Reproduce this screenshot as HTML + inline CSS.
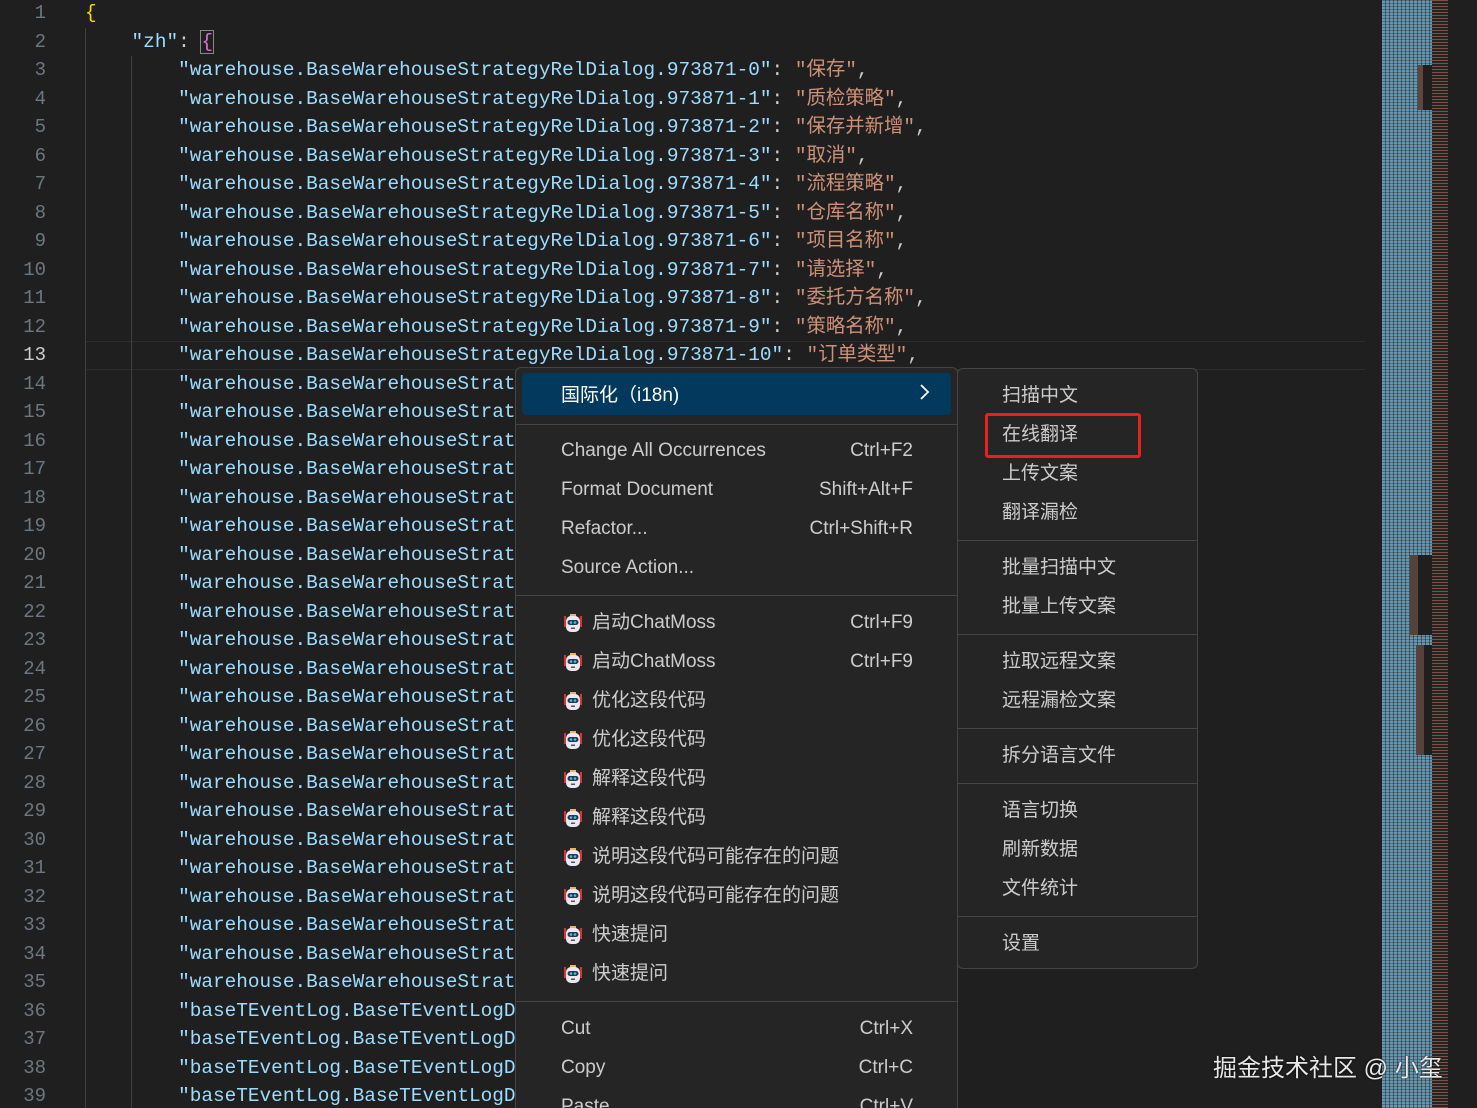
<!DOCTYPE html>
<html><head><meta charset="utf-8"><style>
*{margin:0;padding:0;box-sizing:border-box}
html,body{width:1477px;height:1108px;overflow:hidden;background:#1f1f1f}
#w{position:relative;width:1477px;height:1108px;overflow:hidden;background:#1f1f1f;font-family:"Liberation Mono","Noto Sans CJK SC",monospace}
.ln{position:absolute;left:0;width:46px;text-align:right;font-size:19px;color:#6e7681;height:28.5px;line-height:28.5px}
.cl{position:absolute;left:85px;font-size:19.4px;height:28.5px;line-height:28.5px;white-space:pre;color:#cccccc}
.k{color:#9cdcfe}.s{color:#ce9178}.p{color:#cccccc}
.g{position:absolute;width:1px;background:#404040}
.menu{position:absolute;background:#252526;border:1px solid #454545;border-radius:6px;font-family:"Liberation Sans","Noto Sans CJK SC",sans-serif;font-size:19px;color:#cccccc}
.it{position:absolute;left:0;right:0;height:39px;line-height:39px}
.it .t{position:absolute;left:45px}
.it .sc{position:absolute;right:44px}
.sep{position:absolute;left:0;right:0;height:1px;background:#454545}
.ic{position:absolute;left:47px;top:10px;width:20px;height:20px}
.it.i .t{left:76px}
.sub .it .t{left:44px}
.codes{position:absolute;left:0;top:2px;width:1477px;height:1108px}
</style></head><body><div id="w">
<div class="codes">
<div class="ln" style="top:-3px">1</div>
<div class="ln" style="top:25.5px">2</div>
<div class="ln" style="top:54px">3</div>
<div class="ln" style="top:82.5px">4</div>
<div class="ln" style="top:111px">5</div>
<div class="ln" style="top:139.5px">6</div>
<div class="ln" style="top:168px">7</div>
<div class="ln" style="top:196.5px">8</div>
<div class="ln" style="top:225px">9</div>
<div class="ln" style="top:253.5px">10</div>
<div class="ln" style="top:282px">11</div>
<div class="ln" style="top:310.5px">12</div>
<div class="ln" style="top:339px;color:#cccccc">13</div>
<div class="ln" style="top:367.5px">14</div>
<div class="ln" style="top:396px">15</div>
<div class="ln" style="top:424.5px">16</div>
<div class="ln" style="top:453px">17</div>
<div class="ln" style="top:481.5px">18</div>
<div class="ln" style="top:510px">19</div>
<div class="ln" style="top:538.5px">20</div>
<div class="ln" style="top:567px">21</div>
<div class="ln" style="top:595.5px">22</div>
<div class="ln" style="top:624px">23</div>
<div class="ln" style="top:652.5px">24</div>
<div class="ln" style="top:681px">25</div>
<div class="ln" style="top:709.5px">26</div>
<div class="ln" style="top:738px">27</div>
<div class="ln" style="top:766.5px">28</div>
<div class="ln" style="top:795px">29</div>
<div class="ln" style="top:823.5px">30</div>
<div class="ln" style="top:852px">31</div>
<div class="ln" style="top:880.5px">32</div>
<div class="ln" style="top:909px">33</div>
<div class="ln" style="top:937.5px">34</div>
<div class="ln" style="top:966px">35</div>
<div class="ln" style="top:994.5px">36</div>
<div class="ln" style="top:1023px">37</div>
<div class="ln" style="top:1051.5px">38</div>
<div class="ln" style="top:1080px">39</div>

<div style="position:absolute;left:85px;top:339px;width:1280px;height:29px;border-top:1px solid #2d2d2d;border-bottom:1px solid #2d2d2d"></div>
<div class="g" style="left:85px;top:26px;height:1082px"></div>
<div class="g" style="left:131px;top:54px;height:1054px"></div>

<div class="cl" style="top:-3px"><span style="color:#ffd700">{</span></div>
<div class="cl" style="top:25.5px">    <span class="k">"zh"</span>: <span style="color:#da70d6;outline:1px solid #888">{</span></div>
<div class="cl" style="top:54px">        <span class="k">"warehouse.BaseWarehouseStrategyRelDialog.973871-0"</span>: <span class="s">"保存"</span>,</div>
<div class="cl" style="top:82.5px">        <span class="k">"warehouse.BaseWarehouseStrategyRelDialog.973871-1"</span>: <span class="s">"质检策略"</span>,</div>
<div class="cl" style="top:111px">        <span class="k">"warehouse.BaseWarehouseStrategyRelDialog.973871-2"</span>: <span class="s">"保存并新增"</span>,</div>
<div class="cl" style="top:139.5px">        <span class="k">"warehouse.BaseWarehouseStrategyRelDialog.973871-3"</span>: <span class="s">"取消"</span>,</div>
<div class="cl" style="top:168px">        <span class="k">"warehouse.BaseWarehouseStrategyRelDialog.973871-4"</span>: <span class="s">"流程策略"</span>,</div>
<div class="cl" style="top:196.5px">        <span class="k">"warehouse.BaseWarehouseStrategyRelDialog.973871-5"</span>: <span class="s">"仓库名称"</span>,</div>
<div class="cl" style="top:225px">        <span class="k">"warehouse.BaseWarehouseStrategyRelDialog.973871-6"</span>: <span class="s">"项目名称"</span>,</div>
<div class="cl" style="top:253.5px">        <span class="k">"warehouse.BaseWarehouseStrategyRelDialog.973871-7"</span>: <span class="s">"请选择"</span>,</div>
<div class="cl" style="top:282px">        <span class="k">"warehouse.BaseWarehouseStrategyRelDialog.973871-8"</span>: <span class="s">"委托方名称"</span>,</div>
<div class="cl" style="top:310.5px">        <span class="k">"warehouse.BaseWarehouseStrategyRelDialog.973871-9"</span>: <span class="s">"策略名称"</span>,</div>
<div class="cl" style="top:339px">        <span class="k">"warehouse.BaseWarehouseStrategyRelDialog.973871-10"</span>: <span class="s">"订单类型"</span>,</div>
<div class="cl" style="top:367.5px">        <span class="k">"warehouse.BaseWarehouseStrategy</span></div>
<div class="cl" style="top:396px">        <span class="k">"warehouse.BaseWarehouseStrategy</span></div>
<div class="cl" style="top:424.5px">        <span class="k">"warehouse.BaseWarehouseStrategy</span></div>
<div class="cl" style="top:453px">        <span class="k">"warehouse.BaseWarehouseStrategy</span></div>
<div class="cl" style="top:481.5px">        <span class="k">"warehouse.BaseWarehouseStrategy</span></div>
<div class="cl" style="top:510px">        <span class="k">"warehouse.BaseWarehouseStrategy</span></div>
<div class="cl" style="top:538.5px">        <span class="k">"warehouse.BaseWarehouseStrategy</span></div>
<div class="cl" style="top:567px">        <span class="k">"warehouse.BaseWarehouseStrategy</span></div>
<div class="cl" style="top:595.5px">        <span class="k">"warehouse.BaseWarehouseStrategy</span></div>
<div class="cl" style="top:624px">        <span class="k">"warehouse.BaseWarehouseStrategy</span></div>
<div class="cl" style="top:652.5px">        <span class="k">"warehouse.BaseWarehouseStrategy</span></div>
<div class="cl" style="top:681px">        <span class="k">"warehouse.BaseWarehouseStrategy</span></div>
<div class="cl" style="top:709.5px">        <span class="k">"warehouse.BaseWarehouseStrategy</span></div>
<div class="cl" style="top:738px">        <span class="k">"warehouse.BaseWarehouseStrategy</span></div>
<div class="cl" style="top:766.5px">        <span class="k">"warehouse.BaseWarehouseStrategy</span></div>
<div class="cl" style="top:795px">        <span class="k">"warehouse.BaseWarehouseStrategy</span></div>
<div class="cl" style="top:823.5px">        <span class="k">"warehouse.BaseWarehouseStrategy</span></div>
<div class="cl" style="top:852px">        <span class="k">"warehouse.BaseWarehouseStrategy</span></div>
<div class="cl" style="top:880.5px">        <span class="k">"warehouse.BaseWarehouseStrategy</span></div>
<div class="cl" style="top:909px">        <span class="k">"warehouse.BaseWarehouseStrategy</span></div>
<div class="cl" style="top:937.5px">        <span class="k">"warehouse.BaseWarehouseStrategy</span></div>
<div class="cl" style="top:966px">        <span class="k">"warehouse.BaseWarehouseStrategy</span></div>
<div class="cl" style="top:994.5px">        <span class="k">"baseTEventLog.BaseTEventLogDia</span></div>
<div class="cl" style="top:1023px">        <span class="k">"baseTEventLog.BaseTEventLogDia</span></div>
<div class="cl" style="top:1051.5px">        <span class="k">"baseTEventLog.BaseTEventLogDia</span></div>
<div class="cl" style="top:1080px">        <span class="k">"baseTEventLog.BaseTEventLogDia</span></div>
</div>

<!-- minimap -->
<div style="position:absolute;left:1382px;top:0;width:50px;height:1108px;background:repeating-linear-gradient(90deg,#6a97b0 0 3px,#3a5a6e 3px 4px)"></div>
<div style="position:absolute;left:1382px;top:0;width:50px;height:1108px;background:repeating-linear-gradient(0deg,rgba(30,30,30,.35) 0 1px,transparent 1px 3px)"></div>
<div style="position:absolute;left:1432px;top:0;width:16px;height:1108px;background:repeating-linear-gradient(0deg,#8a6352 0 1px,#2a2422 1px 3px);opacity:.8"></div>
<div style="position:absolute;left:1418px;top:65px;width:14px;height:45px;background:#1f1f1f"></div>
<div style="position:absolute;left:1418px;top:65px;width:5px;height:45px;background:#8a6352;opacity:.6"></div>
<div style="position:absolute;left:1410px;top:555px;width:22px;height:80px;background:#1f1f1f"></div>
<div style="position:absolute;left:1410px;top:555px;width:8px;height:80px;background:#7a5a4a;opacity:.6"></div>
<div style="position:absolute;left:1416px;top:645px;width:16px;height:110px;background:#1f1f1f"></div>
<div style="position:absolute;left:1416px;top:645px;width:8px;height:110px;background:#7a5a4a;opacity:.6"></div>

<div style="position:absolute;left:1213px;top:1048px;font-family:'Liberation Sans','Noto Sans CJK SC',sans-serif;font-size:24px;color:#e8e8e8;text-shadow:0 0 2px #000">掘金技术社区 @ 小玺</div>

<!-- main menu -->
<div class="menu" style="left:515px;top:367px;width:443px;height:760px">
  <div style="position:absolute;left:6px;right:6px;top:5px;height:42px;background:#04395e;border-radius:4px"></div>
  <div class="it" style="top:8px;color:#fff"><span class="t">国际化（i18n)</span><span class="sc" style="right:26px"><svg width="12" height="18" viewBox="0 0 12 18"><path d="M2 2l7 7-7 7" stroke="#fff" stroke-width="1.8" fill="none"/></svg></span></div>
  <div class="sep" style="top:56px"></div>
  <div class="it" style="top:63px"><span class="t">Change All Occurrences</span><span class="sc">Ctrl+F2</span></div>
  <div class="it" style="top:102px"><span class="t">Format Document</span><span class="sc">Shift+Alt+F</span></div>
  <div class="it" style="top:141px"><span class="t">Refactor...</span><span class="sc">Ctrl+Shift+R</span></div>
  <div class="it" style="top:180px"><span class="t">Source Action...</span></div>
  <div class="sep" style="top:227px"></div>
  <div class="it i" style="top:235px"><svg class="ic" viewBox="0 0 20 20"><rect x="1" y="3" width="2" height="11" fill="#d33"/><rect x="17" y="3" width="2" height="11" fill="#d33"/><rect x="7" y="1" width="6" height="3" fill="#f0b060"/><rect x="3" y="3" width="14" height="16" rx="5" fill="#ece8f2"/><rect x="4.5" y="7" width="11" height="5" rx="2.5" fill="#2a3550"/><circle cx="8" cy="9.5" r="1.3" fill="#3cd"/><circle cx="12" cy="9.5" r="1.3" fill="#3cd"/><rect x="8" y="14.5" width="4" height="1.5" fill="#555"/></svg><span class="t">启动ChatMoss</span><span class="sc">Ctrl+F9</span></div>
  <div class="it i" style="top:274px"><svg class="ic" viewBox="0 0 20 20"><rect x="1" y="3" width="2" height="11" fill="#d33"/><rect x="17" y="3" width="2" height="11" fill="#d33"/><rect x="7" y="1" width="6" height="3" fill="#f0b060"/><rect x="3" y="3" width="14" height="16" rx="5" fill="#ece8f2"/><rect x="4.5" y="7" width="11" height="5" rx="2.5" fill="#2a3550"/><circle cx="8" cy="9.5" r="1.3" fill="#3cd"/><circle cx="12" cy="9.5" r="1.3" fill="#3cd"/><rect x="8" y="14.5" width="4" height="1.5" fill="#555"/></svg><span class="t">启动ChatMoss</span><span class="sc">Ctrl+F9</span></div>
  <div class="it i" style="top:313px"><svg class="ic" viewBox="0 0 20 20"><rect x="1" y="3" width="2" height="11" fill="#d33"/><rect x="17" y="3" width="2" height="11" fill="#d33"/><rect x="7" y="1" width="6" height="3" fill="#f0b060"/><rect x="3" y="3" width="14" height="16" rx="5" fill="#ece8f2"/><rect x="4.5" y="7" width="11" height="5" rx="2.5" fill="#2a3550"/><circle cx="8" cy="9.5" r="1.3" fill="#3cd"/><circle cx="12" cy="9.5" r="1.3" fill="#3cd"/><rect x="8" y="14.5" width="4" height="1.5" fill="#555"/></svg><span class="t">优化这段代码</span></div>
  <div class="it i" style="top:352px"><svg class="ic" viewBox="0 0 20 20"><rect x="1" y="3" width="2" height="11" fill="#d33"/><rect x="17" y="3" width="2" height="11" fill="#d33"/><rect x="7" y="1" width="6" height="3" fill="#f0b060"/><rect x="3" y="3" width="14" height="16" rx="5" fill="#ece8f2"/><rect x="4.5" y="7" width="11" height="5" rx="2.5" fill="#2a3550"/><circle cx="8" cy="9.5" r="1.3" fill="#3cd"/><circle cx="12" cy="9.5" r="1.3" fill="#3cd"/><rect x="8" y="14.5" width="4" height="1.5" fill="#555"/></svg><span class="t">优化这段代码</span></div>
  <div class="it i" style="top:391px"><svg class="ic" viewBox="0 0 20 20"><rect x="1" y="3" width="2" height="11" fill="#d33"/><rect x="17" y="3" width="2" height="11" fill="#d33"/><rect x="7" y="1" width="6" height="3" fill="#f0b060"/><rect x="3" y="3" width="14" height="16" rx="5" fill="#ece8f2"/><rect x="4.5" y="7" width="11" height="5" rx="2.5" fill="#2a3550"/><circle cx="8" cy="9.5" r="1.3" fill="#3cd"/><circle cx="12" cy="9.5" r="1.3" fill="#3cd"/><rect x="8" y="14.5" width="4" height="1.5" fill="#555"/></svg><span class="t">解释这段代码</span></div>
  <div class="it i" style="top:430px"><svg class="ic" viewBox="0 0 20 20"><rect x="1" y="3" width="2" height="11" fill="#d33"/><rect x="17" y="3" width="2" height="11" fill="#d33"/><rect x="7" y="1" width="6" height="3" fill="#f0b060"/><rect x="3" y="3" width="14" height="16" rx="5" fill="#ece8f2"/><rect x="4.5" y="7" width="11" height="5" rx="2.5" fill="#2a3550"/><circle cx="8" cy="9.5" r="1.3" fill="#3cd"/><circle cx="12" cy="9.5" r="1.3" fill="#3cd"/><rect x="8" y="14.5" width="4" height="1.5" fill="#555"/></svg><span class="t">解释这段代码</span></div>
  <div class="it i" style="top:469px"><svg class="ic" viewBox="0 0 20 20"><rect x="1" y="3" width="2" height="11" fill="#d33"/><rect x="17" y="3" width="2" height="11" fill="#d33"/><rect x="7" y="1" width="6" height="3" fill="#f0b060"/><rect x="3" y="3" width="14" height="16" rx="5" fill="#ece8f2"/><rect x="4.5" y="7" width="11" height="5" rx="2.5" fill="#2a3550"/><circle cx="8" cy="9.5" r="1.3" fill="#3cd"/><circle cx="12" cy="9.5" r="1.3" fill="#3cd"/><rect x="8" y="14.5" width="4" height="1.5" fill="#555"/></svg><span class="t">说明这段代码可能存在的问题</span></div>
  <div class="it i" style="top:508px"><svg class="ic" viewBox="0 0 20 20"><rect x="1" y="3" width="2" height="11" fill="#d33"/><rect x="17" y="3" width="2" height="11" fill="#d33"/><rect x="7" y="1" width="6" height="3" fill="#f0b060"/><rect x="3" y="3" width="14" height="16" rx="5" fill="#ece8f2"/><rect x="4.5" y="7" width="11" height="5" rx="2.5" fill="#2a3550"/><circle cx="8" cy="9.5" r="1.3" fill="#3cd"/><circle cx="12" cy="9.5" r="1.3" fill="#3cd"/><rect x="8" y="14.5" width="4" height="1.5" fill="#555"/></svg><span class="t">说明这段代码可能存在的问题</span></div>
  <div class="it i" style="top:547px"><svg class="ic" viewBox="0 0 20 20"><rect x="1" y="3" width="2" height="11" fill="#d33"/><rect x="17" y="3" width="2" height="11" fill="#d33"/><rect x="7" y="1" width="6" height="3" fill="#f0b060"/><rect x="3" y="3" width="14" height="16" rx="5" fill="#ece8f2"/><rect x="4.5" y="7" width="11" height="5" rx="2.5" fill="#2a3550"/><circle cx="8" cy="9.5" r="1.3" fill="#3cd"/><circle cx="12" cy="9.5" r="1.3" fill="#3cd"/><rect x="8" y="14.5" width="4" height="1.5" fill="#555"/></svg><span class="t">快速提问</span></div>
  <div class="it i" style="top:586px"><svg class="ic" viewBox="0 0 20 20"><rect x="1" y="3" width="2" height="11" fill="#d33"/><rect x="17" y="3" width="2" height="11" fill="#d33"/><rect x="7" y="1" width="6" height="3" fill="#f0b060"/><rect x="3" y="3" width="14" height="16" rx="5" fill="#ece8f2"/><rect x="4.5" y="7" width="11" height="5" rx="2.5" fill="#2a3550"/><circle cx="8" cy="9.5" r="1.3" fill="#3cd"/><circle cx="12" cy="9.5" r="1.3" fill="#3cd"/><rect x="8" y="14.5" width="4" height="1.5" fill="#555"/></svg><span class="t">快速提问</span></div>
  <div class="sep" style="top:633px"></div>
  <div class="it" style="top:641px"><span class="t">Cut</span><span class="sc">Ctrl+X</span></div>
  <div class="it" style="top:680px"><span class="t">Copy</span><span class="sc">Ctrl+C</span></div>
  <div class="it" style="top:719px"><span class="t">Paste</span><span class="sc">Ctrl+V</span></div>
</div>

<!-- submenu -->
<div class="menu sub" style="left:957px;top:368px;width:241px;height:601px">
  <div class="it" style="top:7px"><span class="t">扫描中文</span></div>
  <div class="it" style="top:46px"><span class="t">在线翻译</span></div>
  <div class="it" style="top:85px"><span class="t">上传文案</span></div>
  <div class="it" style="top:124px"><span class="t">翻译漏检</span></div>
  <div class="sep" style="top:171px"></div>
  <div class="it" style="top:179px"><span class="t">批量扫描中文</span></div>
  <div class="it" style="top:218px"><span class="t">批量上传文案</span></div>
  <div class="sep" style="top:265px"></div>
  <div class="it" style="top:273px"><span class="t">拉取远程文案</span></div>
  <div class="it" style="top:312px"><span class="t">远程漏检文案</span></div>
  <div class="sep" style="top:359px"></div>
  <div class="it" style="top:367px"><span class="t">拆分语言文件</span></div>
  <div class="sep" style="top:414px"></div>
  <div class="it" style="top:422px"><span class="t">语言切换</span></div>
  <div class="it" style="top:461px"><span class="t">刷新数据</span></div>
  <div class="it" style="top:500px"><span class="t">文件统计</span></div>
  <div class="sep" style="top:547px"></div>
  <div class="it" style="top:555px"><span class="t">设置</span></div>
</div>
<div style="position:absolute;left:985px;top:413px;width:156px;height:45px;border:3px solid #e8201e;border-radius:3px"></div>
</div>
</body></html>
